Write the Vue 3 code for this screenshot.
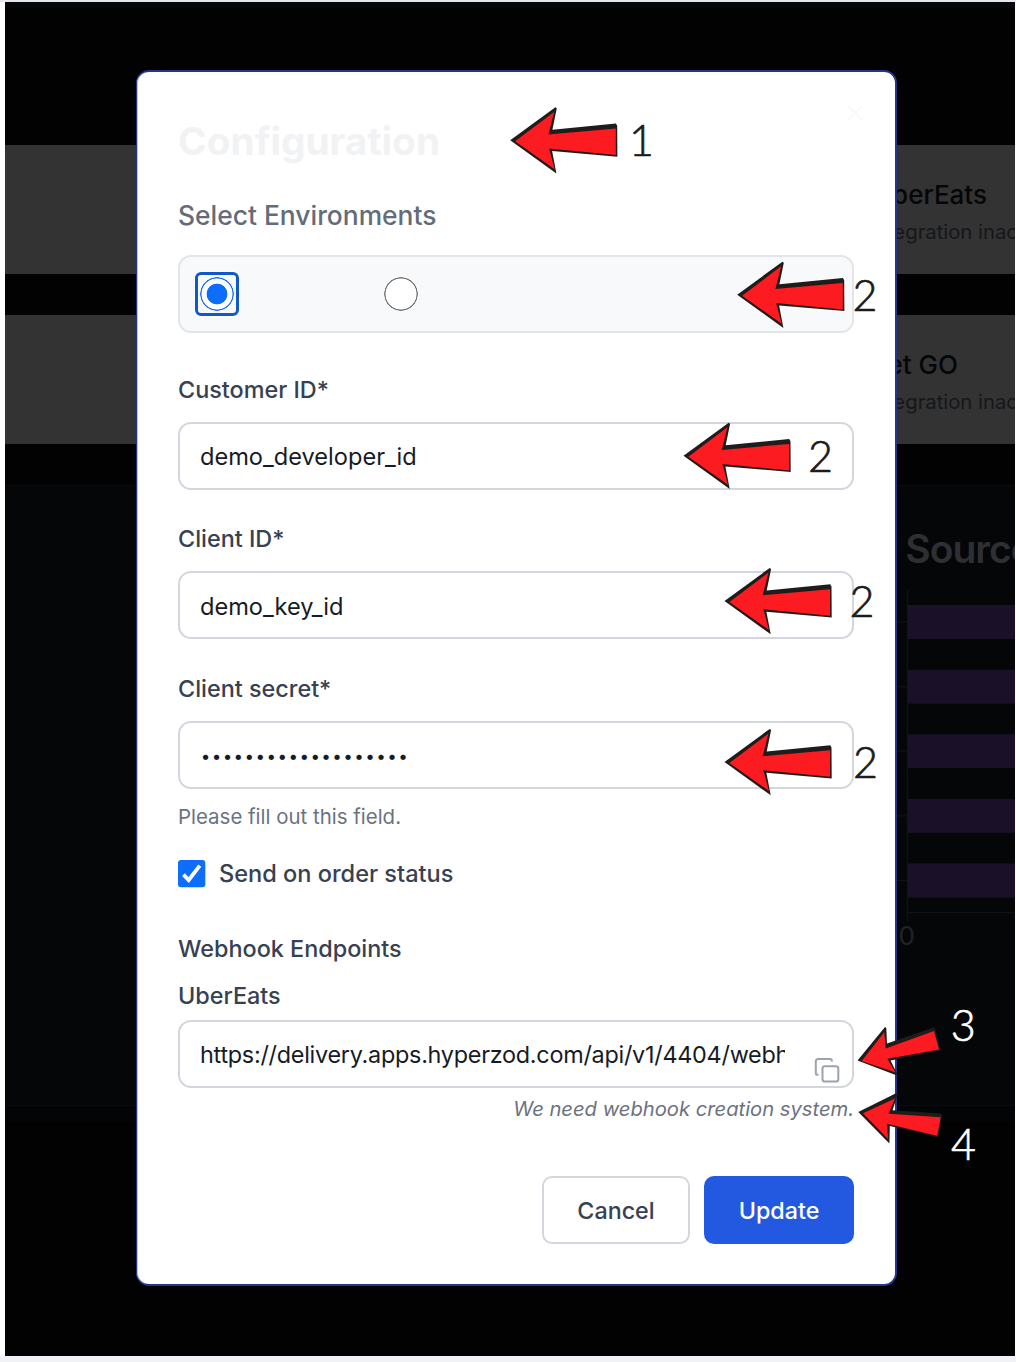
<script setup>
import { ref } from 'vue'

const integrations = [
  { name: 'UberEats', status: 'Integration inactive' },
  { name: 'Jet GO', status: 'Integration inactive' }
]

const bars = [15, 79.7, 144.2, 208.9, 273.5]

const environment = ref('first')

const fields = [
  { label: 'Customer ID*', value: 'demo_developer_id' },
  { label: 'Client ID*', value: 'demo_key_id' },
  { label: 'Client secret*', secret: 19 }
]

const arrows = [
  { x: 509.4, y: 106.3 },
  { x: 736.4, y: 260.7 },
  { x: 682.7, y: 421.7 },
  { x: 723.7, y: 567 },
  { x: 723.7, y: 728 }
]

const marks = [
  { n: '1', x: 629, y: 156 },
  { n: '2', x: 852.5, y: 311 },
  { n: '2', x: 808, y: 472 },
  { n: '2', x: 849.5, y: 617 },
  { n: '2', x: 853, y: 778 },
  { n: '3', x: 950.8, y: 1041, light: true },
  { n: '4', x: 951, y: 1160, light: true }
]
</script>

<template>
  <div class="page">
    <div class="backdrop">
      <div class="strip"></div>
      <div class="cards">
        <article v-for="item in integrations" :key="item.name" class="card">
          <h3>{{ item.name }}</h3>
          <p>{{ item.status }}</p>
        </article>
      </div>
      <section class="chart">
        <h2>Order Source</h2>
        <svg class="plot" width="120" height="370" viewBox="0 0 120 370">
          <g stroke="#101214" stroke-width="1.3">
            <path d="M11.500 0V332M11.500 322.500H120" />
            <path v-for="b in bars" :key="b" :d="`M0 ${b + 17}H11`" />
          </g>
          <rect v-for="b in bars" :key="b" x="11.300" :y="b" width="109" height="34" fill="#1a1028" />
          <text x="10.800" y="355">0</text>
        </svg>
      </section>
      <div class="footer"></div>
    </div>

    <section class="modal">
      <svg class="close" width="16" height="16" viewBox="0 0 16 16" fill="none" stroke="#f8faf9" stroke-width="2">
        <path d="M1 1L15 15M15 1L1 15" />
      </svg>
      <h1>Configuration</h1>
      <h4>Select Environments</h4>
      <div class="environments">
        <span class="radio" :class="{ on: environment === 'first' }" @click="environment = 'first'"><i></i></span>
        <span class="radio" :class="{ on: environment === 'second' }" @click="environment = 'second'"><i></i></span>
      </div>

      <div v-for="f in fields" :key="f.label" class="field">
        <label>{{ f.label }}</label>
        <div class="input">
          <span v-if="f.value">{{ f.value }}</span>
          <span v-else class="dots"><b v-for="n in f.secret" :key="n">•</b></span>
        </div>
      </div>
      <p class="hint">Please fill out this field.</p>

      <div class="check">
        <svg width="28" height="28" viewBox="0 0 28 28">
          <rect x="0" y="0" width="27.300" height="27.300" rx="3" fill="#0d6efd" />
          <path d="M5.400 14.600L10.700 20L21.800 5.600" fill="none" stroke="#fff" stroke-width="3.800" />
        </svg>
        <span>Send on order status</span>
      </div>

      <div class="line webhook">Webhook Endpoints</div>
      <div class="line provider">UberEats</div>
      <div class="input endpoint">
        <span class="url">https://delivery.apps.hyperzod.com/api/v1/4404/webhook</span>
        <svg class="copy" width="28" height="28" viewBox="0 0 28 28" fill="none" stroke="#9ca3af" stroke-width="2">
          <rect x="9.500" y="9.200" width="15.800" height="15.400" rx="2.400" />
          <path d="M5.500 17.800H4.700A1.900 1.900 0 0 1 2.800 15.900V4.300A2.400 2.400 0 0 1 5.200 1.900H16.900A2 2 0 0 1 18.900 3.900V4.600" />
        </svg>
      </div>
      <p class="note">We need webhook creation system.</p>

      <div class="actions">
        <button class="cancel">Cancel</button>
        <button class="update">Update</button>
      </div>
    </section>

    <svg class="annotations" width="1016" height="1362" viewBox="0 0 1016 1362">
      <g v-for="(a, i) in arrows" :key="i" :transform="`translate(${a.x} ${a.y})`">
        <path fill="#1f1d1c" d="M.8 34L46 1L47.400 2L43 23.500L106.500 17.300L107.800 19.500L108 50.400L42.700 44.700L47 67.200Z" />
        <path fill="#fc1b20" d="M5.700 35L44.700 5.600L39 28.300L106.400 22.200V48.700L39.700 42.300L45.300 63Z" />
      </g>
      <path fill="#1f1d1c" d="M857.500 1060.500L885 1027L886.300 1028L887 1043.500L933.700 1027.500L935.300 1029L940.700 1050.700L890.500 1060.500L898.300 1076Z" />
      <path fill="#fc1b20" d="M861.700 1061L884.300 1032.300L885.700 1048.500L934 1031L939 1049.500L887.300 1058.700L895.600 1072.500Z" />
      <path fill="#1f1d1c" d="M858.300 1112L896.500 1093L897.800 1094.500L892.500 1110.300L941 1113.500L942 1115.500L938.300 1137.600L889.800 1126L889.400 1143.500Z" />
      <path fill="#fc1b20" d="M863 1113.300L895 1098.500L888.500 1113.700L940.700 1117.300L937.200 1135.800L887 1123.700L888 1139Z" />
      <text v-for="(m, i) in marks" :key="`m${i}`" :x="m.x" :y="m.y" :class="{ light: m.light }">{{ m.n }}</text>
    </svg>
  </div>
</template>

<style>
body {
  margin: 0;
  background: #fff;
}
</style>

<style scoped>
.page {
  position: relative;
  box-sizing: border-box;
  width: 1016px;
  height: 1362px;
  padding: 2px 1px 6px 5px;
  background: linear-gradient(#e5e7eb 2px, #fff 2px, #fff 1356px, #f1f2f6 1356px);
  font-family: Inter, "Liberation Sans", sans-serif;
  overflow: hidden;
}
h1, h2, h3, h4, p { margin: 0; }

.backdrop {
  display: flex;
  flex-direction: column;
  height: 1354px;
  background: #020202;
  overflow: hidden;
}
.strip { height: 6px; background: #04060a; flex: none; }
.cards {
  display: flex;
  flex-direction: column;
  gap: 41px;
  padding: 137px 0 41px;
  border-bottom: 1px solid #0b0c0e;
}
.card {
  box-sizing: border-box;
  height: 129px;
  padding: 32px 0 0 791px;
  background: #333;
  white-space: nowrap;
}
.card h3 {
  width: 191px;
  font-size: 26px;
  line-height: 36px;
  font-weight: 500;
  color: #050608;
  text-align: right;
}
.card:last-child h3 { width: 162px; }
.card p {
  margin: 7px 0 0 73.500px;
  font-size: 20.300px;
  line-height: 24px;
  color: #15171a;
}
.chart {
  height: 619px;
  padding-left: 891px;
  border-bottom: 1px solid #0a0b0d;
  background: #040608;
}
.chart h2 {
  width: 145px;
  margin-left: -8.300px;
  padding-top: 39px;
  direction: rtl;
  white-space: nowrap;
  font-size: 39px;
  line-height: 48px;
  font-weight: 600;
  letter-spacing: -1px;
  color: #2e2f32;
}
.plot { display: block; margin-top: 17px; }
.plot text { font-size: 26px; fill: #222426; text-anchor: middle; }
.footer { height: 16px; background: #020406; }

.modal {
  position: absolute;
  left: 136px;
  top: 70px;
  box-sizing: border-box;
  width: 761px;
  height: 1216px;
  padding: 45px 41px 0;
  border: 2px solid #26348c;
  border-left-width: 1px;
  border-radius: 13px;
  background: #fff;
  box-shadow: inset 1px 0 #b9bfe6;
  color: #374151;
}
.close { position: absolute; left: 709.500px; top: 32.500px; }
h1 { font-size: 38.800px; line-height: 48px; font-weight: 700; color: #f1f2f4; }
h4 {
  margin-top: 32px;
  font-size: 26.400px;
  line-height: 36px;
  font-weight: 500;
  color: #646c79;
}
.environments {
  display: flex;
  align-items: center;
  gap: 139.500px;
  box-sizing: border-box;
  height: 78px;
  margin: 22px 0 42.500px;
  padding-left: 15px;
  border: 2px solid #e3e5e9;
  border-radius: 13px;
  background: #f8f9fb;
}
.radio {
  display: flex;
  align-items: center;
  justify-content: center;
  box-sizing: border-box;
  width: 44px;
  height: 44px;
  border: 3px solid transparent;
  border-radius: 6px;
}
.radio i {
  width: 34px;
  height: 34px;
  border-radius: 50%;
  background: radial-gradient(circle closest-side, #fff 15.200px, #767676 15.800px, #767676 16.500px, transparent 17px);
}
.radio.on { border-color: #1059c6; box-shadow: 0 0 0 1px #fff; }
.radio.on i {
  background: radial-gradient(circle closest-side, #0d6efd 10px, #fff 10.700px, #fff 15.200px, #1a70fb 15.800px, #1a70fb 16.500px, transparent 17px);
}
.field { margin-bottom: 35.500px; }
.field label {
  display: block;
  margin-bottom: 18px;
  font-size: 23.400px;
  line-height: 28px;
  font-weight: 500;
}
.input {
  display: flex;
  align-items: center;
  box-sizing: border-box;
  height: 68px;
  padding: 2px 20px 0;
  border: 2px solid #d3d7dd;
  border-radius: 13px;
  font-size: 23.600px;
  line-height: 32px;
  color: #171b26;
}
.field .input { padding-top: 3px; }
.dots { display: flex; padding-bottom: 1px; }
.dots b {
  width: 10.970px;
  font-size: 17px;
  font-weight: 400;
  text-align: center;
}
.hint {
  margin-top: -19px;
  font-size: 20.450px;
  line-height: 24px;
  color: #6b7280;
}
.check {
  display: flex;
  align-items: center;
  gap: 13px;
  height: 28px;
  margin-top: 31px;
  font-size: 23.550px;
  font-weight: 500;
}
.check span { padding-bottom: 2px; }
.line { font-size: 23.400px; line-height: 28px; font-weight: 500; }
.webhook { margin-top: 47px; }
.provider { margin: 19px 0 10px; }
.endpoint { position: relative; }
.url {
  width: 584.500px;
  overflow: hidden;
  white-space: nowrap;
  font-size: 23.400px;
  letter-spacing: -0.260px;
}
.copy { position: absolute; left: 633px; top: 35px; }
.note {
  margin-top: 9px;
  text-align: right;
  font-size: 20.200px;
  line-height: 24px;
  font-style: italic;
  color: #6b7280;
}
.actions {
  display: flex;
  justify-content: flex-end;
  gap: 14px;
  margin-top: 55px;
}
button {
  box-sizing: border-box;
  height: 68px;
  padding: 0;
  border-radius: 10px;
  font: 500 23.300px Inter, sans-serif;
}
.cancel { width: 148px; border: 2px solid #d3d7dd; background: #fff; color: #374151; }
.update { width: 150px; border: 0; background: #2359e1; color: #fff; }

.annotations { position: absolute; left: 0; top: 0; pointer-events: none; }
.annotations text {
  font: 300 43px Lato, sans-serif;
  fill: #1c1b1b;
  stroke: #1c1b1b;
  stroke-width: 0.700px;
}
.annotations text.light { fill: #fff; stroke: #fff; }
</style>
